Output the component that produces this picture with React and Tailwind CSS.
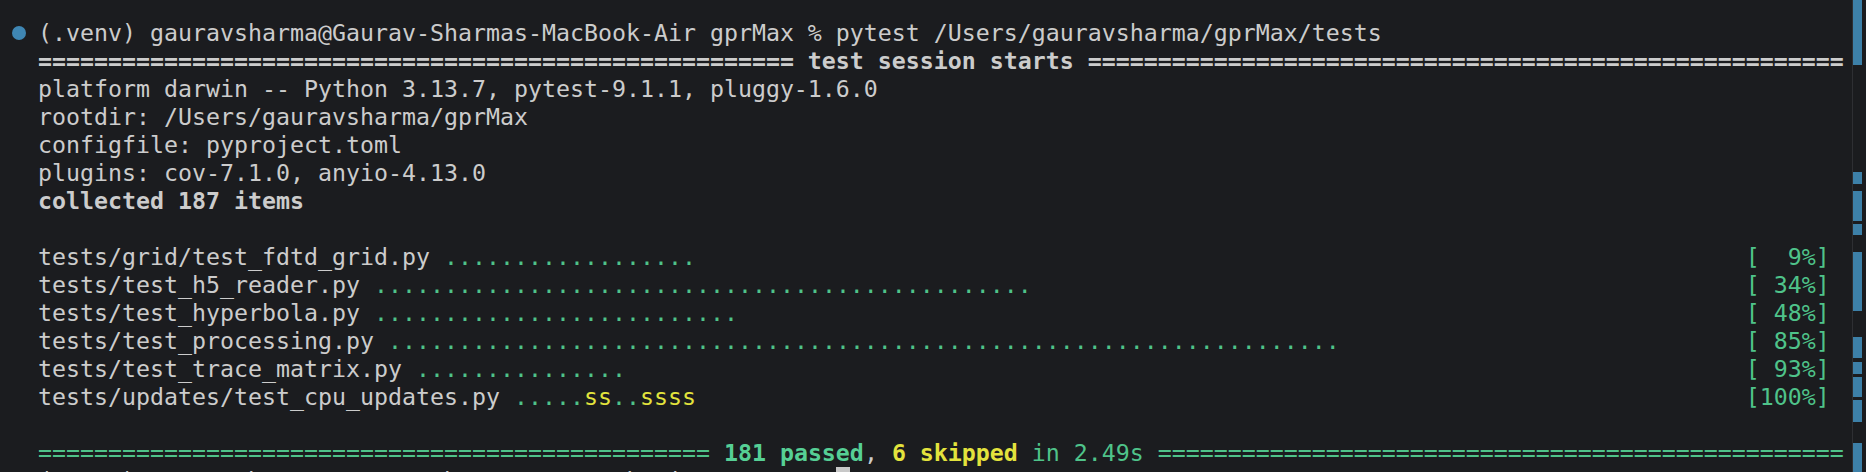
import React from "react";

const W = 129;
const G = "text-[#4fc38a]";
const Y = "text-[#e3e33d]";
const T = "text-[#cccccc]";

const files = [
  ["tests/grid/test_fdtd_grid.py", [[".".repeat(18), G]], "[  9%]"],
  ["tests/test_h5_reader.py", [[".".repeat(47), G]], "[ 34%]"],
  ["tests/test_hyperbola.py", [[".".repeat(26), G]], "[ 48%]"],
  ["tests/test_processing.py", [[".".repeat(68), G]], "[ 85%]"],
  ["tests/test_trace_matrix.py", [[".".repeat(15), G]], "[ 93%]"],
  ["tests/updates/test_cpu_updates.py", [[".....", G], ["ss", Y], ["..", G], ["ssss", Y]], "[100%]"],
];

// overview ruler marks on the right edge (top, bottom)
const marks = [
  [0, 65], [172, 184], [191, 221], [224, 235], [252, 311],
  [337, 358], [362, 374], [377, 397], [400, 422], [443, 472],
];

function fileRow([name, dots, pct]) {
  const used = name.length + 1 + dots.reduce((n, d) => n + d[0].length, 0);
  const fill = " ".repeat(W - 1 - pct.length - used);
  return [[name + " ", T], ...dots, [fill, T], [pct, G]];
}

const rows = [
  { dot: true, segs: [["(.venv) gauravsharma@Gaurav-Sharmas-MacBook-Air gprMax % pytest /Users/gauravsharma/gprMax/tests", T]] },
  { segs: [["=".repeat(54) + " test session starts " + "=".repeat(54), T + " font-bold"]] },
  { segs: [["platform darwin -- Python 3.13.7, pytest-9.1.1, pluggy-1.6.0", T]] },
  { segs: [["rootdir: /Users/gauravsharma/gprMax", T]] },
  { segs: [["configfile: pyproject.toml", T]] },
  { segs: [["plugins: cov-7.1.0, anyio-4.13.0", T]] },
  { segs: [["collected 187 items", T + " font-bold"]] },
  { segs: [[" ", T]] },
  ...files.map((f) => ({ segs: fileRow(f) })),
  { segs: [[" ", T]] },
  {
    segs: [
      ["=".repeat(48) + " ", G],
      ["181 passed", "text-[#56cf95] font-bold"],
      [", ", T],
      ["6 skipped", Y + " font-bold"],
      [" in 2.49s ", G],
      ["=".repeat(49), G],
    ],
  },
  { dot: true, cursor: true, segs: [["(.venv) gauravsharma@Gaurav-Sharmas-MacBook-Air gprMax % ", T]] },
];

export default function App() {
  return (
    <div className="flex h-[472px] w-[1866px] overflow-hidden bg-[#1b1c1f] font-['DejaVu_Sans_Mono',monospace] text-[23.25px] leading-[28px]">
      <div className="flex-1 pt-[19px]">
        {rows.map((r, i) => (
          <div key={i} className="flex h-[28px]">
            <div className="flex w-[38px] shrink-0 items-center justify-center">
              {r.dot && <span className="h-[14px] w-[14px] rounded-full bg-[#3f86b3]" />}
            </div>
            <pre className="flex font-['DejaVu_Sans_Mono',monospace]">
              {r.segs.map(([t, c], j) => (
                <span key={j} className={c}>{t}</span>
              ))}
              {r.cursor && <span className="bg-[#c8c8c8]"> </span>}
            </pre>
          </div>
        ))}
      </div>
      <div className="relative w-[14px] shrink-0 border-l border-[#2e2f33]">
        {marks.map(([a, b], i) => (
          <div
            key={i}
            className="absolute left-0 w-[9px] bg-[#3d80a8]"
            style={{ top: a, height: b - a }}
          />
        ))}
      </div>
    </div>
  );
}
